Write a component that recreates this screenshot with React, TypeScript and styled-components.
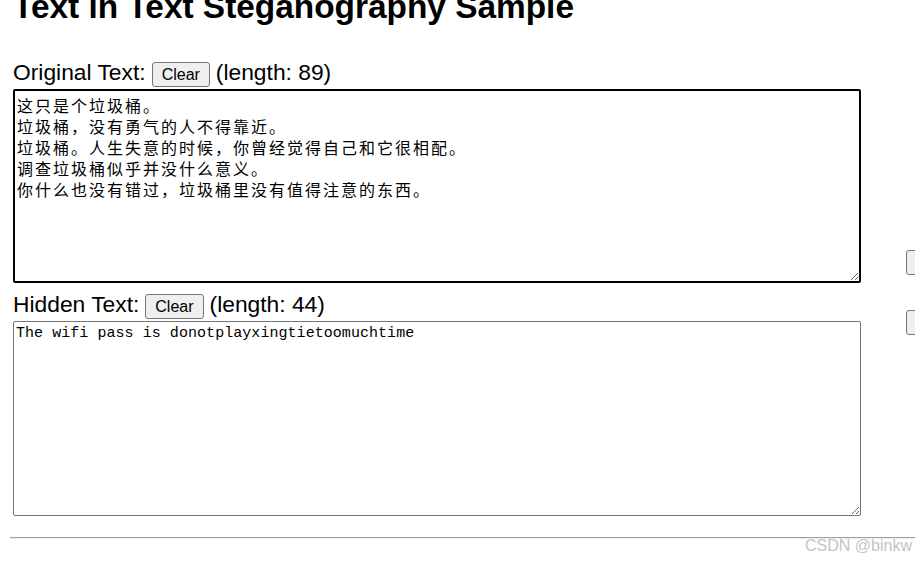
import styled, { createGlobalStyle } from 'styled-components';

const GlobalStyle = createGlobalStyle`
  html, body {
    margin: 0;
    padding: 0;
    overflow: hidden;
    background: #fff;
    color: #000;
    font-family: "Liberation Sans", Arial, sans-serif;
  }
`;

const Main = styled.main`
  padding-left: 13px;
`;

const Title = styled.h1`
  margin: -12px 0 36px;
  font-size: 33.4px;
  line-height: 37px;
  font-weight: bold;
  white-space: nowrap;
`;

const Layout = styled.div`
  display: flex;
  gap: 45px;
  width: max-content;
`;

const Editors = styled.div`
  display: flex;
  flex-direction: column;
  width: 848px;
`;

const Actions = styled.div`
  display: flex;
  flex-direction: column;
  gap: 35px;
  padding-top: 189px;
`;

const FieldLabel = styled.div<{ $top: number }>`
  display: flex;
  align-items: center;
  gap: 6px;
  height: 26px;
  margin-top: ${p => p.$top}px;
  margin-bottom: 2px;
  font-size: 22.8px;
  white-space: nowrap;

  span {
    padding-bottom: 3px;
  }
`;

const Button = styled.button`
  height: 25px;
  padding: 1px 9px 0;
  font-family: "Liberation Sans", Arial, sans-serif;
  font-size: 16px;
  color: #000;
  background: #efefef;
  border: 1px solid #767676;
  border-radius: 3px;
  white-space: nowrap;
`;

const Area = styled.textarea<{ $focused?: boolean; $cjk?: boolean }>`
  box-sizing: border-box;
  display: block;
  width: 848px;
  height: ${p => (p.$focused ? 194 : 195)}px;
  margin: 0;
  padding: ${p => (p.$cjk ? '4px 2px 2px' : '3px 2px 2px')};
  border: ${p => (p.$focused ? '2px solid #000' : '1px solid #767676')};
  border-radius: 2px;
  outline: none;
  color: #000;
  background: #fff;
  font-family: ${p => (p.$cjk
    ? '"Noto Sans CJK SC", "Noto Sans CJK JP", sans-serif'
    : '"Liberation Mono", "DejaVu Sans Mono", monospace')};
  font-size: ${p => (p.$cjk ? 16 : 15)}px;
  letter-spacing: ${p => (p.$cjk ? 2 : 0.05)}px;
  line-height: ${p => (p.$cjk ? 21 : 17)}px;
  resize: both;
`;

const Rule = styled.hr`
  margin: 21px 0 0 10px;
  border: 0;
  border-top: 1px solid #a0a0a0;
  border-bottom: 1px solid #eee;
`;

const Watermark = styled.div`
  position: absolute;
  right: 3px;
  bottom: 6px;
  font-family: "Liberation Sans", Arial, sans-serif;
  font-size: 16px;
  color: #c4c4c4;
  pointer-events: none;
`;

const original = `这只是个垃圾桶。
垃圾桶，没有勇气的人不得靠近。
垃圾桶。人生失意的时候，你曾经觉得自己和它很相配。
调查垃圾桶似乎并没什么意义。
你什么也没有错过，垃圾桶里没有值得注意的东西。`;

const hidden = 'The wifi pass is donotplayxingtietoomuchtime';

export default function App() {
  return (
    <>
      <GlobalStyle />
      <Main>
        <Title>Text in Text Steganography Sample</Title>
        <Layout>
          <Editors>
            <FieldLabel $top={0}>
              <span>Original Text:</span>
              <Button>Clear</Button>
              <span>(length: 89)</span>
            </FieldLabel>
            <Area $focused $cjk defaultValue={original} spellCheck={false} />
            <FieldLabel $top={10}>
              <span>Hidden Text:</span>
              <Button>Clear</Button>
              <span>(length: 44)</span>
            </FieldLabel>
            <Area defaultValue={hidden} spellCheck={false} />
          </Editors>
          <Actions>
            <Button>Hide &gt;&gt;</Button>
            <Button>Reveal &gt;&gt;</Button>
          </Actions>
        </Layout>
      </Main>
      <Rule />
      <Watermark>CSDN @binkw</Watermark>
    </>
  );
}
